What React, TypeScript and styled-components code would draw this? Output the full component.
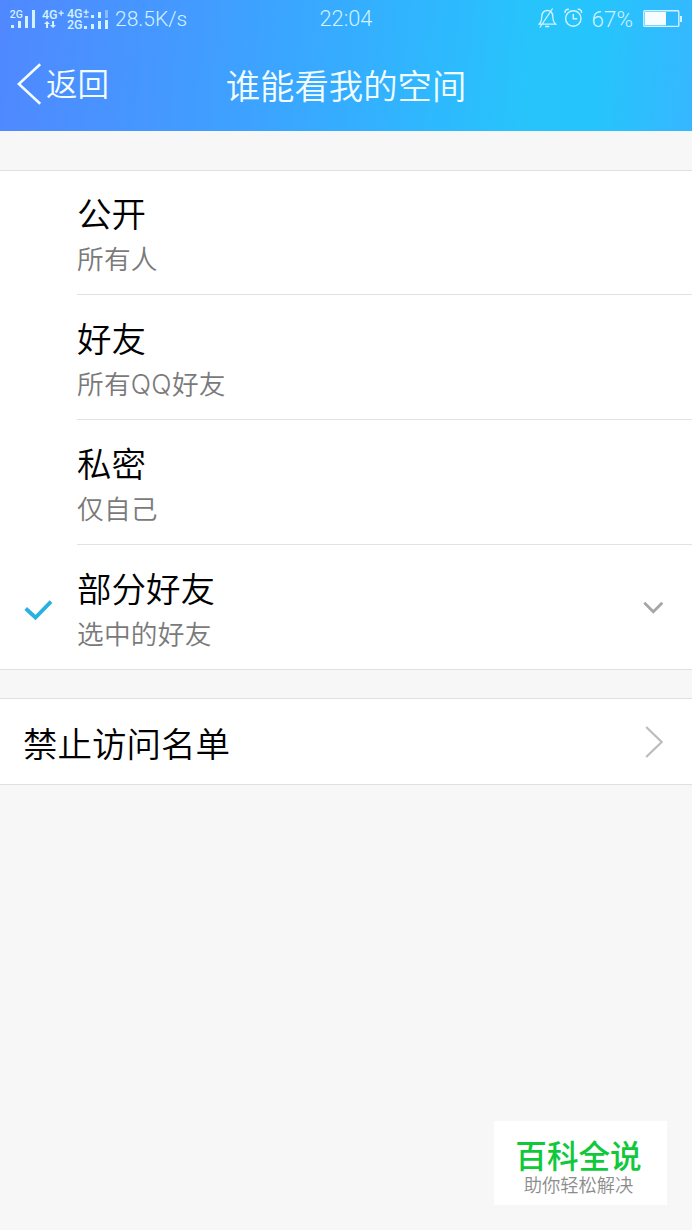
import React from 'react';
import styled, { createGlobalStyle } from 'styled-components';

const GlobalStyle = createGlobalStyle`
  * { box-sizing: border-box; }
  body {
    margin: 0;
    background: #f7f7f8;
    font-family: Roboto, "Noto Sans CJK SC", sans-serif;
    font-weight: 350;
  }
`;

const Page = styled.main`
  position: relative;
  width: 692px;
  height: 1230px;
  overflow: hidden;
  background: #f7f7f8;
`;

const Header = styled.header`
  height: 131px;
  background: linear-gradient(95deg, #5088ff 0%, #4499ff 25%, #35adff 50%, #27c4fc 76%, #26c4fc 86%, #36b7ff 100%);
  color: #f2fdff;
`;

const StatusBar = styled.div`
  display: grid;
  grid-template-columns: 1fr auto 1fr;
  align-items: center;
  height: 36px;
  padding: 0 10px;
  color: #d2f2ff;
  font-size: 21px;
  font-weight: 300;
  line-height: 36px;
`;

const StatusGroup = styled.div<{ $end?: boolean }>`
  display: flex;
  align-items: center;
  justify-content: ${(p) => (p.$end ? 'flex-end' : 'flex-start')};
`;

const Speed = styled.span`
  margin-left: 6px;
`;

const Clock = styled.span`
  padding-top: 1px;
  font-size: 21.8px;
`;

const Percent = styled.span`
  margin: 0 10px 0 9px;
  font-size: 22.4px;
`;

const NavBar = styled.nav`
  display: grid;
  grid-template-columns: 1fr auto 1fr;
  align-items: center;
  height: 95px;
  padding: 0 17px;
`;

const Back = styled.button`
  display: flex;
  align-items: center;
  gap: 4px;
  padding: 0;
  border: 0;
  background: none;
  color: inherit;
  font: inherit;
  font-size: 31.5px;
  line-height: 48px;
`;

const BackLabel = styled.span`
  padding-top: 4px;
`;

const Title = styled.h1`
  margin: 6px 0 0;
  font-size: 34.4px;
  font-weight: 350;
  line-height: 50px;
`;

const Card = styled.section<{ $top: number }>`
  margin-top: ${(p) => p.$top}px;
  border-top: 1px solid #e0e0e1;
  border-bottom: 1px solid #e0e0e1;
  background: #fff;
`;

const OptionText = styled.div`
  align-self: flex-start;
  padding-top: 22px;
`;

const Option = styled.div`
  display: grid;
  grid-template-columns: 77px 1fr;
  height: 125px;

  &:first-child, &:last-child { height: 124px; }
  &:first-child ${OptionText} { padding-top: 21px; }
`;

const Mark = styled.div`
  display: flex;
  align-items: center;
  padding: 6px 0 0 24px;
`;

const OptionBody = styled.div`
  display: flex;
  align-items: center;
  justify-content: space-between;
  padding-right: 28px;

  ${Option}:not(:last-child) & { border-bottom: 1px solid #e2e2e3; }
`;

const Name = styled.div`
  color: #000;
  font-size: 34.5px;
  line-height: 46px;
`;

const Hint = styled.div`
  color: #7a7a7a;
  font-family: Inter, "Noto Sans CJK SC", sans-serif;
  font-size: 26.7px;
  letter-spacing: 0.25px;
  line-height: 42px;
`;

const LinkRow = styled.div`
  display: flex;
  align-items: center;
  justify-content: space-between;
  height: 85px;
  padding: 0 28px 0 23px;

  ${Name} { padding-top: 7px; }
`;

const Watermark = styled.aside`
  position: absolute;
  left: 494px;
  top: 1121px;
  width: 173px;
  height: 84px;
  padding-top: 15px;
  background: #fff;
  text-align: center;
`;

const Brand = styled.div`
  margin-left: -4px;
  color: #10c93b;
  font-family: "Noto Sans CJK SC", sans-serif;
  font-size: 31.6px;
  font-weight: 500;
  line-height: 36px;
`;

const Slogan = styled.div`
  margin: 2px 0 0 -4px;
  color: #8c8c8c;
  font-size: 18.3px;
  line-height: 24px;
`;

const SignalIcons = () => (
  <svg width="99" height="24" viewBox="10 5 99 24" fill="#d2f2ff" fontFamily="Roboto, sans-serif" fontWeight="500">
    <text x="9.8" y="16" fontSize="10.5">2G</text>
    <path d="M11 23h3v3h-3zM18 19h3v7h-3zM25 14h3v12h-3zM32 8h3v18h-3z" />
    <text x="42" y="17" fontSize="12.5">4G</text>
    <path d="M58.5 10.4h2v-2h1.3v2h2v1.3h-2v2h-1.3v-2h-2zM44 22l3-3 3 3h-2v4h-2v-4zM50 23h2v-4h2v4h2l-3 3z" />
    <text x="67" y="16" fontSize="12.5">4G</text>
    <text x="67" y="27.3" fontSize="12.5">2G</text>
    <path d="M83.5 9.4h2v-2h1.3v2h2v1.3h-2v2h-1.3v-2h-2zM84 14.2h4.5v1.3H84zM84 24h3v3h-3zM91 13h3v3h-3zM91 22h3v5h-3zM98 10h3v6h-3zM98 19h3v8h-3zM105 18h3v9h-3z" />
    <path d="M105 8h3v8h-3z" opacity=".45" />
  </svg>
);

const MutedBell = () => (
  <svg width="19" height="21" viewBox="537 8 19 21" fill="none" stroke="#d2f2ff" strokeWidth="1.3">
    <path d="M538 24.2c2-1.7 2.7-3.5 2.8-7.5.1-4 2.2-6.2 5.5-6.2s5.4 2.2 5.5 6.2c.1 4 .9 5.8 3 7.5zM544.2 26.5h4M538.8 27.5l12.8-19" />
  </svg>
);

const AlarmIcon = () => (
  <svg width="19" height="21" viewBox="563 8 19 21" fill="none" stroke="#d2f2ff" strokeWidth="1.4">
    <circle cx="572.3" cy="18.5" r="7.7" />
    <path d="M572.3 14v4.8h4M564.2 13c-.8-2 1.3-4.2 3.8-3.6M580.4 13c.8-2-1.3-4.2-3.8-3.6" />
  </svg>
);

const StatusGlyphs = styled.span`
  display: flex;
  gap: 7px;
`;

const BatteryIcon = () => (
  <svg width="39" height="18" viewBox="643 9 39 18" fill="none">
    <rect x="643.8" y="9.8" width="35" height="15.6" rx="1" stroke="#d2f2ff" strokeWidth="1.4" />
    <path d="M645 11H666v13.2h-21z" fill="#f5fdff" />
    <path d="M680 15h2v6h-2z" fill="#d2f2ff" />
  </svg>
);

const BackIcon = () => (
  <svg width="25" height="42" viewBox="0 0 25 42" fill="none" stroke="currentColor" strokeWidth="2.6">
    <path d="M23.2 1.2 1.8 21 23.2 40.8" />
  </svg>
);

const CheckIcon = () => (
  <svg width="29" height="21" viewBox="0 0 29 21" fill="none" stroke="#29b1e0" strokeWidth="3.8">
    <path d="m1.7 8.5 9.8 9L27 1.7" />
  </svg>
);

const DownIcon = () => (
  <svg width="21" height="13" viewBox="0 0 21 13" fill="none" stroke="#a6a6a7" strokeWidth="2.8">
    <path d="m1.3 1.8 9 9 9-9" />
  </svg>
);

const RightIcon = () => (
  <svg width="19" height="32" viewBox="0 0 19 32" fill="none" stroke="#bcbcbd" strokeWidth="2.2">
    <path d="M1.2 1 16.7 16 1.2 31" />
  </svg>
);

const options = [
  { name: '公开', hint: '所有人' },
  { name: '好友', hint: '所有QQ好友' },
  { name: '私密', hint: '仅自己' },
  { name: '部分好友', hint: '选中的好友', selected: true },
];

export default function App() {
  return (
    <Page>
      <GlobalStyle />
      <Header>
        <StatusBar>
          <StatusGroup>
            <SignalIcons />
            <Speed>28.5K/s</Speed>
          </StatusGroup>
          <Clock>22:04</Clock>
          <StatusGroup $end>
            <StatusGlyphs>
              <MutedBell />
              <AlarmIcon />
            </StatusGlyphs>
            <Percent>67%</Percent>
            <BatteryIcon />
          </StatusGroup>
        </StatusBar>
        <NavBar>
          <Back>
            <BackIcon />
            <BackLabel>返回</BackLabel>
          </Back>
          <Title>谁能看我的空间</Title>
        </NavBar>
      </Header>
      <Card $top={39}>
        {options.map((o) => (
          <Option key={o.name}>
            <Mark>{o.selected && <CheckIcon />}</Mark>
            <OptionBody>
              <OptionText>
                <Name>{o.name}</Name>
                <Hint>{o.hint}</Hint>
              </OptionText>
              {o.selected && <DownIcon />}
            </OptionBody>
          </Option>
        ))}
      </Card>
      <Card $top={28}>
        <LinkRow>
          <Name>禁止访问名单</Name>
          <RightIcon />
        </LinkRow>
      </Card>
      <Watermark>
        <Brand>百科全说</Brand>
        <Slogan>助你轻松解决</Slogan>
      </Watermark>
    </Page>
  );
}
